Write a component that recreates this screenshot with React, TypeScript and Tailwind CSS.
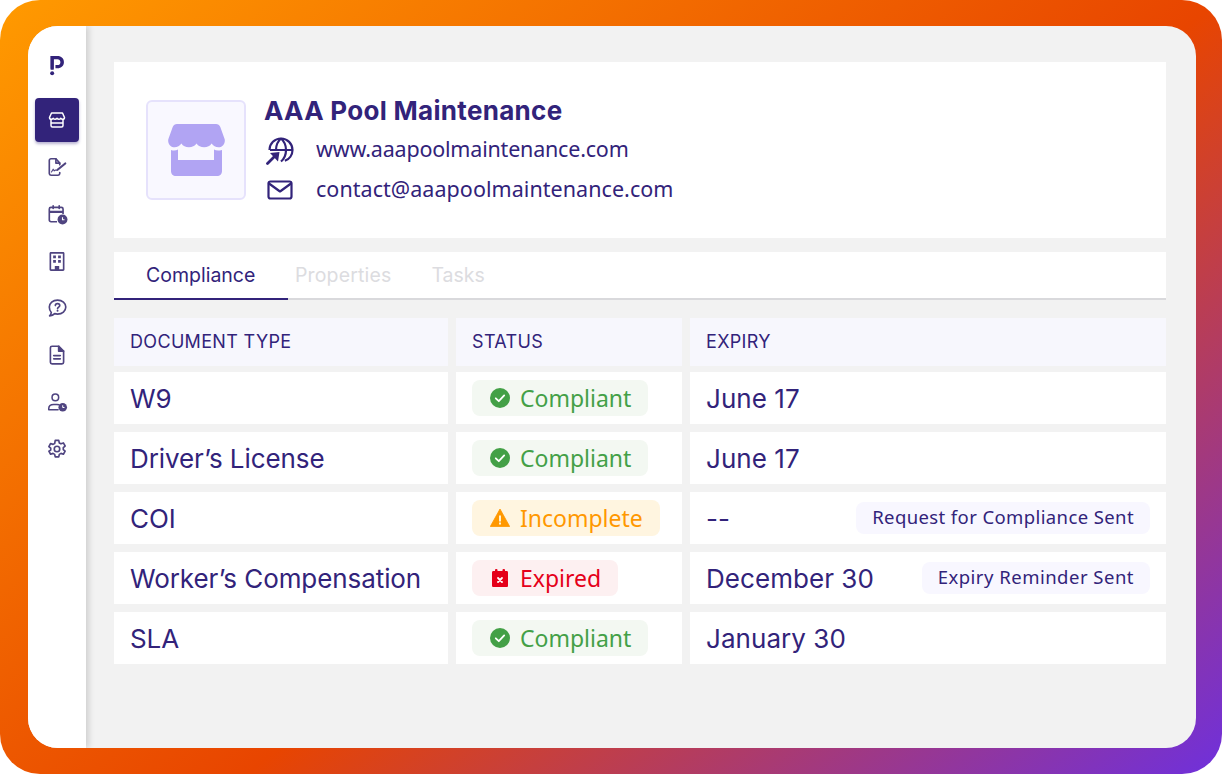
import React from "react";

const ink = "#32237a";
const side = "#4f4480";
const ISZ = 22;

function StoreSolid({ className, color }: { className?: string; color: string }) {
  return (
    <svg viewBox="0 0 57 52" className={className} fill={color}>
      <path d="M9 0h39c2 0 3.500 1 4.300 3L56.600 15c1 3.500-1.300 7.500-5 8.200-3.200.5-6.300-1.200-8-3.700-1.700 2.500-4 3.800-7.500 3.800-3.300 0-5.800-1.300-7.600-3.800-1.800 2.500-4.300 3.800-7.600 3.800-3.500 0-5.800-1.300-7.500-3.800-1.700 2.500-4.800 4.200-8 3.700-3.700-.7-6-4.700-5-8.200L4.700 3C5.500 1 7 0 9 0z" />
      <path d="M3 26c2.500 1 5 .7 7-.5V36h36V25.500c2 1.200 4.500 1.500 8 .5v21c0 3-2 5-5 5H8c-3 0-5-2-5-5z" />
    </svg>
  );
}

const Stroke = ({ children }: { children: React.ReactNode }) => (
  <svg viewBox="0 0 20 20" width={ISZ} height={ISZ} fill="none" stroke={side} strokeWidth="1.500" strokeLinecap="round" strokeLinejoin="round">
    {children}
  </svg>
);

const Logo = () => (
  <svg viewBox="0 0 16 20" width="18" height="22">
    <path d="M2.200 1h6.300c3.300 0 5.800 2.300 5.800 5.500S11.800 12 8.500 12H6.600V9.200h1.800c1.500 0 2.700-1 2.700-2.700S9.900 3.800 8.400 3.800H5v8.700H2.200z" fill={ink} />
    <path d="M2.200 1H5v12.300H2.200z" fill={ink} />
    <circle cx="3.600" cy="16.500" r="1.800" fill={ink} />
  </svg>
);

const SidebarIcons = [
  <Stroke key="sign">
    <path d="M12.500 8V6.500L9 2.500H4.500c-.8 0-1.500.7-1.500 1.500v12c0 .8.700 1.500 1.500 1.500h6.500c.8 0 1.500-.7 1.500-1.500v-1" />
    <path d="M9 2.500V6.500h3.500" />
    <path d="M5 14.500l1.500-2.500 1 1.500 1-.8 1.500.3" strokeWidth="1" />
    <path d="M10.500 12.500L17.500 6.800" strokeWidth="2" />
  </Stroke>,
  <svg key="cal" viewBox="0 0 20 20" width={ISZ} height={ISZ} fill="none">
    <path d="M10 17H4.500C3.700 17 3 16.300 3 15.500V5.500C3 4.700 3.700 4 4.500 4h9.500c.8 0 1.500.7 1.500 1.500V10" stroke={side} strokeWidth="1.500" />
    <path d="M3 8h12.500" stroke={side} strokeWidth="2" />
    <path d="M6.500 2.500V5M12 2.500V5" stroke={side} strokeWidth="1.500" strokeLinecap="round" />
    <circle cx="15" cy="15" r="4.500" fill={side} />
    <path d="M15 13v2.200h1.800" stroke="#fff" strokeWidth="1" />
  </svg>,
  <svg key="bld" viewBox="0 0 20 20" width={ISZ} height={ISZ}>
    <path fillRule="evenodd" clipRule="evenodd" fill={side} d="M4.500 1.800h11c.8 0 1.300.5 1.300 1.300v14.600c0 .8-.5 1.300-1.300 1.300h-11c-.8 0-1.300-.5-1.300-1.300V3.100c0-.8.500-1.300 1.300-1.300zM4.700 3.300v14.200h3.300v-3h4v3h3.300V3.300zM6.500 5h2.500v2.500H6.500zM11 5h2.500v2.500H11zM6.500 9h2.500v2.500H6.500zM11 9h2.500v2.500H11z" />
  </svg>,
  <svg key="q" viewBox="0 0 20 20" width={ISZ} height={ISZ} fill="none">
    <path d="M10.500 2.800c4.300 0 7.500 2.800 7.500 6.400s-3.200 6.300-7.500 6.300c-.9 0-1.800-.1-2.600-.4-1.200 1.200-2.700 1.800-4.600 2 .9-1 1.400-1.900 1.500-3C3.800 13 3 11.200 3 9.200c0-3.600 3.200-6.400 7.500-6.400z" stroke={side} strokeWidth="1.500" strokeLinejoin="round" />
    <path d="M8.500 7.800c0-1.100.9-1.800 2-1.800s2 .7 2 1.700c0 1.500-2 1.500-2 3" stroke={side} strokeWidth="1.500" strokeLinecap="round" />
    <circle cx="10.500" cy="12.600" r=".9" fill={side} />
  </svg>,
  <Stroke key="doc">
    <path d="M11.500 2H5.500C4.700 2 4 2.700 4 3.500v13c0 .8.700 1.500 1.500 1.500h9c.8 0 1.500-.7 1.500-1.500V6.500z" />
    <path d="M11.500 2v4.500H16" fill={side} />
    <path d="M7 10.500h6M7 13.500h6" />
  </Stroke>,
  <svg key="user" viewBox="0 0 20 20" width={ISZ} height={ISZ} fill="none">
    <circle cx="8.500" cy="5.800" r="3" stroke={side} strokeWidth="1.400" />
    <path d="M2.500 17v-1c0-2.400 2-3.800 4.500-3.800h3c.6 0 1.200.1 1.700.3M2.500 17H11" stroke={side} strokeWidth="1.400" strokeLinecap="round" />
    <circle cx="15.200" cy="14.800" r="3.900" fill={side} />
    <path d="M15.200 13v2h1.600" stroke="#fff" strokeWidth=".9" />
  </svg>,
  <Stroke key="gear">
    <circle cx="10" cy="10" r="2.500" />
    <path d="M8.400 2.200h3.200l.5 2.300 1.500.8 2.200-.8 1.600 2.800-1.700 1.500v1.700l1.700 1.500-1.600 2.800-2.200-.8-1.500.9-.5 2.300H8.400l-.5-2.300-1.500-.9-2.200.8-1.600-2.800L4.300 11V9.300L2.600 7.800l1.600-2.800 2.200.8 1.500-.8z" />
  </Stroke>,
];

function Sidebar() {
  return (
    <aside className="w-[58px] bg-white flex flex-col items-center shrink-0 shadow-[3px_0_6px_rgba(0,0,0,0.14)] z-10 pt-[29px]">
      <Logo />
      <div className="mt-[21px] w-[44px] h-[44px] rounded-[4px] bg-[#32237a] flex items-center justify-center shadow-[0_2px_3px_rgba(50,35,122,0.35)]">
        <svg viewBox="0 0 20 20" width="20" height="20" fill="none" stroke="#fff" strokeWidth="1.500" strokeLinejoin="round">
          <path d="M4.500 3h11l2 4.500c0 1-1 1.800-1.900 1.800-.8 0-1.400-.4-1.900-1-.4.6-1.100 1-1.800 1s-1.400-.4-1.900-1c-.5.6-1.100 1-1.900 1s-1.400-.4-1.800-1c-.5.6-1.100 1-1.900 1-.9 0-1.900-.8-1.900-1.800z" />
          <path d="M4 9.500V15.500c0 .8.700 1.500 1.500 1.500h9c.8 0 1.500-.7 1.500-1.500V9.500M4 13h12" />
        </svg>
      </div>
      <div className="mt-[14px] flex flex-col items-center gap-[25px]">
        {SidebarIcons.map((ic, i) => (
          <div key={i} className="h-[22px] flex items-center justify-center">{ic}</div>
        ))}
      </div>
    </aside>
  );
}

function Header() {
  return (
    <section className="bg-white h-[176px] flex items-center pl-[32px] pr-[32px]">
      <div className="w-[100px] h-[100px] rounded-[6px] border-2 border-[#e6e2fc] bg-[#f9f8ff] flex items-center justify-center">
        <StoreSolid className="w-[57px] h-[52px] -mt-[1px]" color="#b1a4f3" />
      </div>
      <div className="ml-[18px] flex flex-col">
        <h1 className="text-[26px] leading-[30px] font-bold text-[#32237a] font-['Inter','Liberation_Sans',sans-serif] tracking-[0.3px]">AAA Pool Maintenance</h1>
        <div className="mt-[9px] flex items-center h-[30px]">
          <svg viewBox="0 0 30 30" width="30" height="30" fill="none" stroke={ink} strokeWidth="2.200" className="ml-[1px]">
            <circle cx="16" cy="15" r="11.500" strokeDasharray="50 22" strokeDashoffset="36" />
            <path d="M5 15h22.500M16 3.500c-3.500 3-5 7-5 11.500M16 3.500c3.500 3 5 7 5 11.500s-1.500 8.500-5 11.500" />
            <path d="M2.500 28.500L9 22" strokeWidth="2.800" strokeLinecap="round" />
            <path d="M5 18l9.500-1-1.500 9.500z" fill={ink} stroke="none" />
          </svg>
          <span className="ml-[21px] text-[21.500px] text-[#32237a] font-['Noto_Sans','Open_Sans',sans-serif] tracking-[-0.2px]">www.aaapoolmaintenance.com</span>
        </div>
        <div className="mt-[10px] flex items-center h-[30px]">
          <svg viewBox="0 0 26 20" width="26" height="20" fill="none" stroke={ink} strokeWidth="2.200" strokeLinejoin="round" strokeLinecap="round" className="ml-[3px]">
            <rect x="1.500" y="1.500" width="23" height="17" rx="2" />
            <path d="M2 3.500l11 8 11-8" />
          </svg>
          <span className="ml-[23px] text-[21.500px] text-[#32237a] font-['Noto_Sans','Open_Sans',sans-serif] tracking-[0.05px]">contact@aaapoolmaintenance.com</span>
        </div>
      </div>
    </section>
  );
}

function Tabs() {
  return (
    <nav className="mt-[14px] bg-white h-[48px] flex border-b-2 border-[#d9d9dc] font-['Inter','Liberation_Sans',sans-serif] text-[19.500px]">
      <div className="w-[174px] -mb-[2px] h-[48px] border-b-2 border-[#32237a] flex items-center pl-[32px] pt-[2px] text-[#32237a]">Compliance</div>
      <div className="ml-[7px] flex items-center pt-[2px] text-[#dcdce0] tracking-[0.15px]">Properties</div>
      <div className="ml-[40px] flex items-center pt-[2px] text-[#dcdce0]">Tasks</div>
    </nav>
  );
}

type Status = "ok" | "warn" | "exp";

const statusStyle: Record<Status, { box: string; label: string }> = {
  ok: { box: "bg-[#f3f8f2] text-[#43a047]", label: "Compliant" },
  warn: { box: "bg-[#fff5e0] text-[#ff9800]", label: "Incomplete" },
  exp: { box: "bg-[#fdf0f1] text-[#e5001a]", label: "Expired" },
};

function StatusIcon({ s }: { s: Status }) {
  if (s === "ok")
    return (
      <svg viewBox="0 0 20 20" width="20" height="20">
        <circle cx="10" cy="10" r="10" fill="#43a047" />
        <path d="M5.800 10.300l3 2.900 5.400-5.800" fill="none" stroke="#fff" strokeWidth="1.800" strokeLinecap="round" strokeLinejoin="round" />
      </svg>
    );
  if (s === "warn")
    return (
      <svg viewBox="0 0 20 20" width="20" height="20">
        <path d="M10 1L19.700 18.500H.3z" fill="#ff9800" stroke="#ff9800" strokeWidth=".8" strokeLinejoin="round" />
        <rect x="9" y="7.500" width="2" height="6" fill="#fff3d6" />
        <rect x="9" y="14.500" width="2" height="2" fill="#fff3d6" />
      </svg>
    );
  return (
    <svg viewBox="0 0 20 20" width="20" height="20">
      <path d="M3.500 3h13c1 0 1.500.5 1.500 1.500v13c0 1-.5 1.500-1.500 1.500h-13c-1 0-1.500-.5-1.500-1.500v-13C2 3.500 2.500 3 3.500 3z" fill="#e5001a" />
      <rect x="5" y="1" width="2.500" height="4" rx="1" fill="#e5001a" />
      <rect x="12.500" y="1" width="2.500" height="4" rx="1" fill="#e5001a" />
      <path d="M8 10l4 4M12 10l-4 4" stroke="#fff" strokeWidth="1.800" strokeLinecap="round" />
    </svg>
  );
}

const rows: { doc: string; s: Status; exp: string; note?: string; noteTrack?: string; mt: string; w: string }[] = [
  { doc: "W9", s: "ok", exp: "June 17", mt: "mt-[6px]", w: "w-[176px]" },
  { doc: "Driver’s License", s: "ok", exp: "June 17", mt: "mt-[8px]", w: "w-[176px]" },
  { doc: "COI", s: "warn", exp: "--", note: "Request for Compliance Sent", noteTrack: "tracking-[0.39px]", mt: "mt-[8px]", w: "w-[188px]" },
  { doc: "Worker’s Compensation", s: "exp", exp: "December 30", note: "Expiry Reminder Sent", noteTrack: "tracking-[0.49px]", mt: "mt-[8px]", w: "w-[146px]" },
  { doc: "SLA", s: "ok", exp: "January 30", mt: "mt-[8px]", w: "w-[176px]" },
];

const cols = "grid grid-cols-[334px_226px_476px] gap-x-[8px]";
const rubik = "font-['Inter','Liberation_Sans',sans-serif]";
const fira = "font-['Noto_Sans','Open_Sans',sans-serif]";

function Table() {
  return (
    <section className="mt-[18px]">
      <div className={`${cols} h-[48px] text-[18px] text-[#32237a] ${rubik}`}>
        <div className="bg-[#f7f7fd] flex items-center pl-[16px] pb-[2px] tracking-[0.33px]">DOCUMENT TYPE</div>
        <div className="bg-[#f7f7fd] flex items-center pl-[16px] pb-[2px] tracking-[0.33px]">STATUS</div>
        <div className="bg-[#f7f7fd] flex items-center pl-[16px] pb-[2px] tracking-[0.33px]">EXPIRY</div>
      </div>
      {rows.map((r) => (
        <div key={r.doc} className={`${cols} ${r.mt} h-[52px] text-[#32237a]`}>
          <div className={`bg-white flex items-center pl-[16px] text-[26px] tracking-[-0.08px] ${rubik}`}>{r.doc}</div>
          <div className="bg-white flex items-center pl-[16px]">
            <div className={`${r.w} h-[36px] rounded-[8px] flex items-center pl-[18px] ${statusStyle[r.s].box}`}>
              <StatusIcon s={r.s} />
              <span className={`ml-[10px] text-[23px] ${fira}`}>{statusStyle[r.s].label}</span>
            </div>
          </div>
          <div className="bg-white flex items-center justify-between pl-[16px] pr-[16px]">
            <span className={`text-[26px] tracking-[0.05px] ${rubik}`}>{r.exp}</span>
            {r.note && (
              <span className={`h-[32px] rounded-[8px] bg-[#f8f7ff] px-[16px] pb-[2px] flex items-center text-[18.500px] ${r.noteTrack} ${fira}`}>{r.note}</span>
            )}
          </div>
        </div>
      ))}
    </section>
  );
}

export default function App() {
  return (
    <div className="w-[1222px] h-[774px] rounded-[40px] bg-[linear-gradient(141.5deg,#ff9a00_0%,#e84500_55.6%,#6f30dc_100%)] pt-[26px] pl-[28px] pr-[26px] pb-[26px]">
      <div className="h-full rounded-[30px] overflow-hidden flex bg-[#f2f2f2]">
        <Sidebar />
        <main className="flex-1 pl-[28px] pr-[30px] pt-[36px]">
          <Header />
          <Tabs />
          <Table />
        </main>
      </div>
    </div>
  );
}
